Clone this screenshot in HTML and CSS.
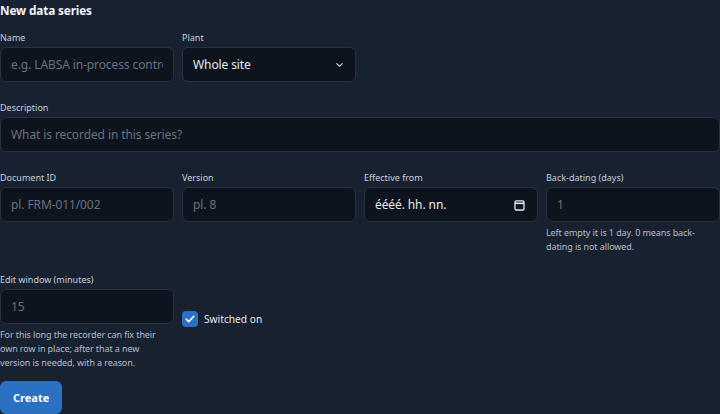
FILE: index.html
```html
<!DOCTYPE html>
<html lang="en">
<head>
<meta charset="utf-8">
<title>New data series</title>
<link rel="stylesheet" href="styles.css">
</head>
<body>
<form class="series-form">
  <h2 class="title">New data series</h2>
  <div class="grid">
    <div class="field">
      <label class="label">Name</label>
      <input class="control" type="text" placeholder="e.g. LABSA in-process control">
    </div>
    <div class="field">
      <label class="label">Plant</label>
      <div class="control select">
        <span class="value">Whole site</span>
        <svg class="chev" width="7" height="4" viewBox="0 0 7 4"><path d="M0.8 0.7l2.7 2.6 2.7-2.6" fill="none" stroke="#cfd5dd" stroke-width="1.1" stroke-linecap="round" stroke-linejoin="round"/></svg>
      </div>
    </div>
    <div class="field wide">
      <label class="label">Description</label>
      <input class="control" type="text" placeholder="What is recorded in this series?">
    </div>
    <div class="field">
      <label class="label">Document ID</label>
      <input class="control" type="text" placeholder="pl. FRM-011/002">
    </div>
    <div class="field">
      <label class="label">Version</label>
      <input class="control" type="text" placeholder="pl. 8">
    </div>
    <div class="field">
      <label class="label">Effective from</label>
      <div class="control date">
        <span class="value">éééé. hh. nn.</span>
        <svg class="cal" width="11" height="12" viewBox="0 0 11 12"><rect x="1" y="1.8" width="9" height="9.2" rx="1.3" fill="none" stroke="#e6e9ee" stroke-width="1.3"/><path d="M1 4.3h9" stroke="#e6e9ee" stroke-width="1.6"/></svg>
      </div>
    </div>
    <div class="field">
      <label class="label">Back-dating (days)</label>
      <input class="control" type="text" placeholder="1">
      <p class="help">Left empty it is 1 day. 0 means back-dating is not allowed.</p>
    </div>
    <div class="field">
      <label class="label">Edit window (minutes)</label>
      <input class="control" type="text" placeholder="15">
      <p class="help">For this long the recorder can fix their own row in place; after that a new version is needed, with a reason.</p>
    </div>
    <label class="check">
      <span class="box"><svg width="10" height="8" viewBox="0 0 10 8"><path d="M1.2 4.2l2.6 2.4L8.8 1.3" fill="none" stroke="#fff" stroke-width="1.6" stroke-linecap="round" stroke-linejoin="round"/></svg></span>
      <span>Switched on</span>
    </label>
  </div>
  <div class="actions">
    <button class="btn" type="button">Create</button>
  </div>
</form>
</body>
</html>
```
FILE: styles.css
```css
html, body {
  margin: 0;
  padding: 0;
  background: #172130;
}
body {
  font-family: "Noto Sans", "DejaVu Sans", sans-serif;
  color: #e6e9ee;
  width: 720px;
  overflow: hidden;
}
.series-form {
  display: block;
}
.title {
  margin: 0 0 11px;
  font-size: 11.8px;
  letter-spacing: -0.15px;
  line-height: 20px;
  font-weight: 700;
  color: #f1f4f8;
}
.grid {
  display: grid;
  grid-template-columns: repeat(4, 1fr);
  column-gap: 8px;
  row-gap: 19px;
  align-items: start;
}
.field {
  display: flex;
  flex-direction: column;
  min-width: 0;
}
.wide {
  grid-column: 1 / -1;
}
.label {
  font-size: 9px;
  line-height: 13px;
  margin-bottom: 3px;
  color: #c6ced8;
}
.control {
  box-sizing: border-box;
  height: 35px;
  width: 100%;
  padding: 0 10px;
  background: #0e141e;
  border: 1px solid #273141;
  border-radius: 6px;
  color: #e6e9ee;
  font-family: inherit;
  font-size: 12px;
  letter-spacing: -0.1px;
  outline: none;
}
.control::placeholder {
  color: #687180;
}
.select, .date {
  display: flex;
  align-items: center;
  justify-content: space-between;
}
.chev {
  margin-right: 2px;
}
.cal {
  margin-right: 2px;
}
.help {
  margin: 4px 0 0;
  padding-right: 4px;
  font-size: 9px;
  letter-spacing: -0.1px;
  line-height: 14px;
  color: #b5bdc8;
}
.check {
  align-self: center;
  display: flex;
  align-items: center;
  gap: 6px;
  margin-bottom: 6px;
  font-size: 10.2px;
  color: #e6e9ee;
}
.box {
  width: 16px;
  height: 16px;
  border-radius: 4px;
  background: #2a71c4;
  display: flex;
  align-items: center;
  justify-content: center;
}
.actions {
  margin-top: 11px;
}
.btn {
  height: 33px;
  padding: 0 13px;
  border: none;
  border-radius: 6px;
  background: #2a71c4;
  color: #ffffff;
  font-family: inherit;
  font-size: 11px;
  font-weight: 700;
}
```
